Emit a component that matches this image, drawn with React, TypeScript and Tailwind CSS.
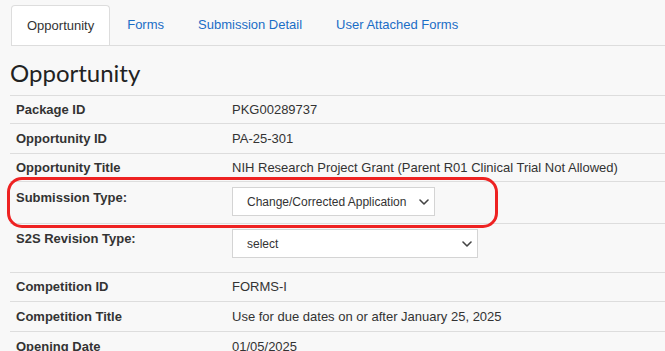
import React from 'react';

interface Row {
  label: string;
  value?: string;
  height: string;
  select?: { value: string; width: string; labelPad: string };
}

const rows: Row[] = [
  { label: 'Package ID', value: 'PKG00289737', height: 'h-[28px]' },
  { label: 'Opportunity ID', value: 'PA-25-301', height: 'h-[30px]' },
  {
    label: 'Opportunity Title',
    value: 'NIH Research Project Grant (Parent R01 Clinical Trial Not Allowed)',
    height: 'h-[28px]',
  },
  {
    label: 'Submission Type:',
    height: 'h-[42px]',
    select: { value: 'Change/Corrected Application', width: 'w-[203px]', labelPad: 'pt-[6px]' },
  },
  {
    label: 'S2S Revision Type:',
    height: 'h-[49px]',
    select: { value: 'select', width: 'w-[246px]', labelPad: 'pt-[5px]' },
  },
  { label: 'Competition ID', value: 'FORMS-I', height: 'h-[29px]' },
  { label: 'Competition Title', value: 'Use for due dates on or after January 25, 2025', height: 'h-[30px]' },
  { label: 'Opening Date', value: '01/05/2025', height: 'h-[30px]' },
];

const Chevron = () => (
  <svg width="10" height="6" viewBox="0 0 10 6" className="pointer-events-none absolute right-[6px] top-1/2 -translate-y-1/2">
    <path d="M1 1l4 4 4-4" fill="none" stroke="#444" strokeWidth="1.6" strokeLinecap="round" strokeLinejoin="round" />
  </svg>
);

const tabs = ['Opportunity', 'Forms', 'Submission Detail', 'User Attached Forms'];

export default function App() {
  return (
    <div className="relative min-h-screen overflow-hidden bg-[#f8f8f8] font-['Liberation_Sans',Arial,sans-serif] text-[13px] text-[#333]">
      {/* Tabs */}
      <div className="pl-[11px] pt-[5px]">
        <div className="flex border-b border-[#ddd]">
          {tabs.map((tab, i) =>
            i === 0 ? (
              <div
                key={tab}
                className="flex h-[40px] items-center rounded-t-[4px] border border-b-0 border-[#ddd] bg-white px-[15px] text-[#333]"
              >
                {tab}
              </div>
            ) : (
              <div key={tab} className="flex h-[40px] items-center px-[17px] text-[#1a6dc6]">
                {tab}
              </div>
            )
          )}
        </div>
      </div>

      {/* Heading */}
      <h1 className="ml-[10px] mt-[11px] h-[32px] font-['Lato',sans-serif] text-[24px] leading-[32px] font-normal text-[#222]">
        Opportunity
      </h1>

      {/* Details table */}
      <div className="ml-[10px] mt-[6px]">
        {rows.map((row) => (
          <div key={row.label} className={`flex border-t border-[#ddd] ${row.height} ${row.select ? 'items-start' : 'items-center'}`}>
            <div className={`w-[222px] shrink-0 pl-[6px] font-bold ${row.select ? row.select.labelPad : ''}`}>{row.label}</div>
            {row.select ? (
              <div className={`relative mt-[5px] ${row.select.width}`}>
                <select
                  defaultValue={row.select.value}
                  className="h-[29px] w-full appearance-none border border-[#d4d4d4] bg-white pl-[14px] font-['Liberation_Sans',Arial,sans-serif] text-[12px] text-[#333] outline-none"
                >
                  <option>{row.select.value}</option>
                </select>
                <Chevron />
              </div>
            ) : (
              <div>{row.value}</div>
            )}
          </div>
        ))}
      </div>

      {/* Highlight annotation */}
      <div className="pointer-events-none absolute left-[7px] top-[177px] h-[51px] w-[491px] rounded-[15px] border-[3px] border-[#ee2222]" />
    </div>
  );
}
